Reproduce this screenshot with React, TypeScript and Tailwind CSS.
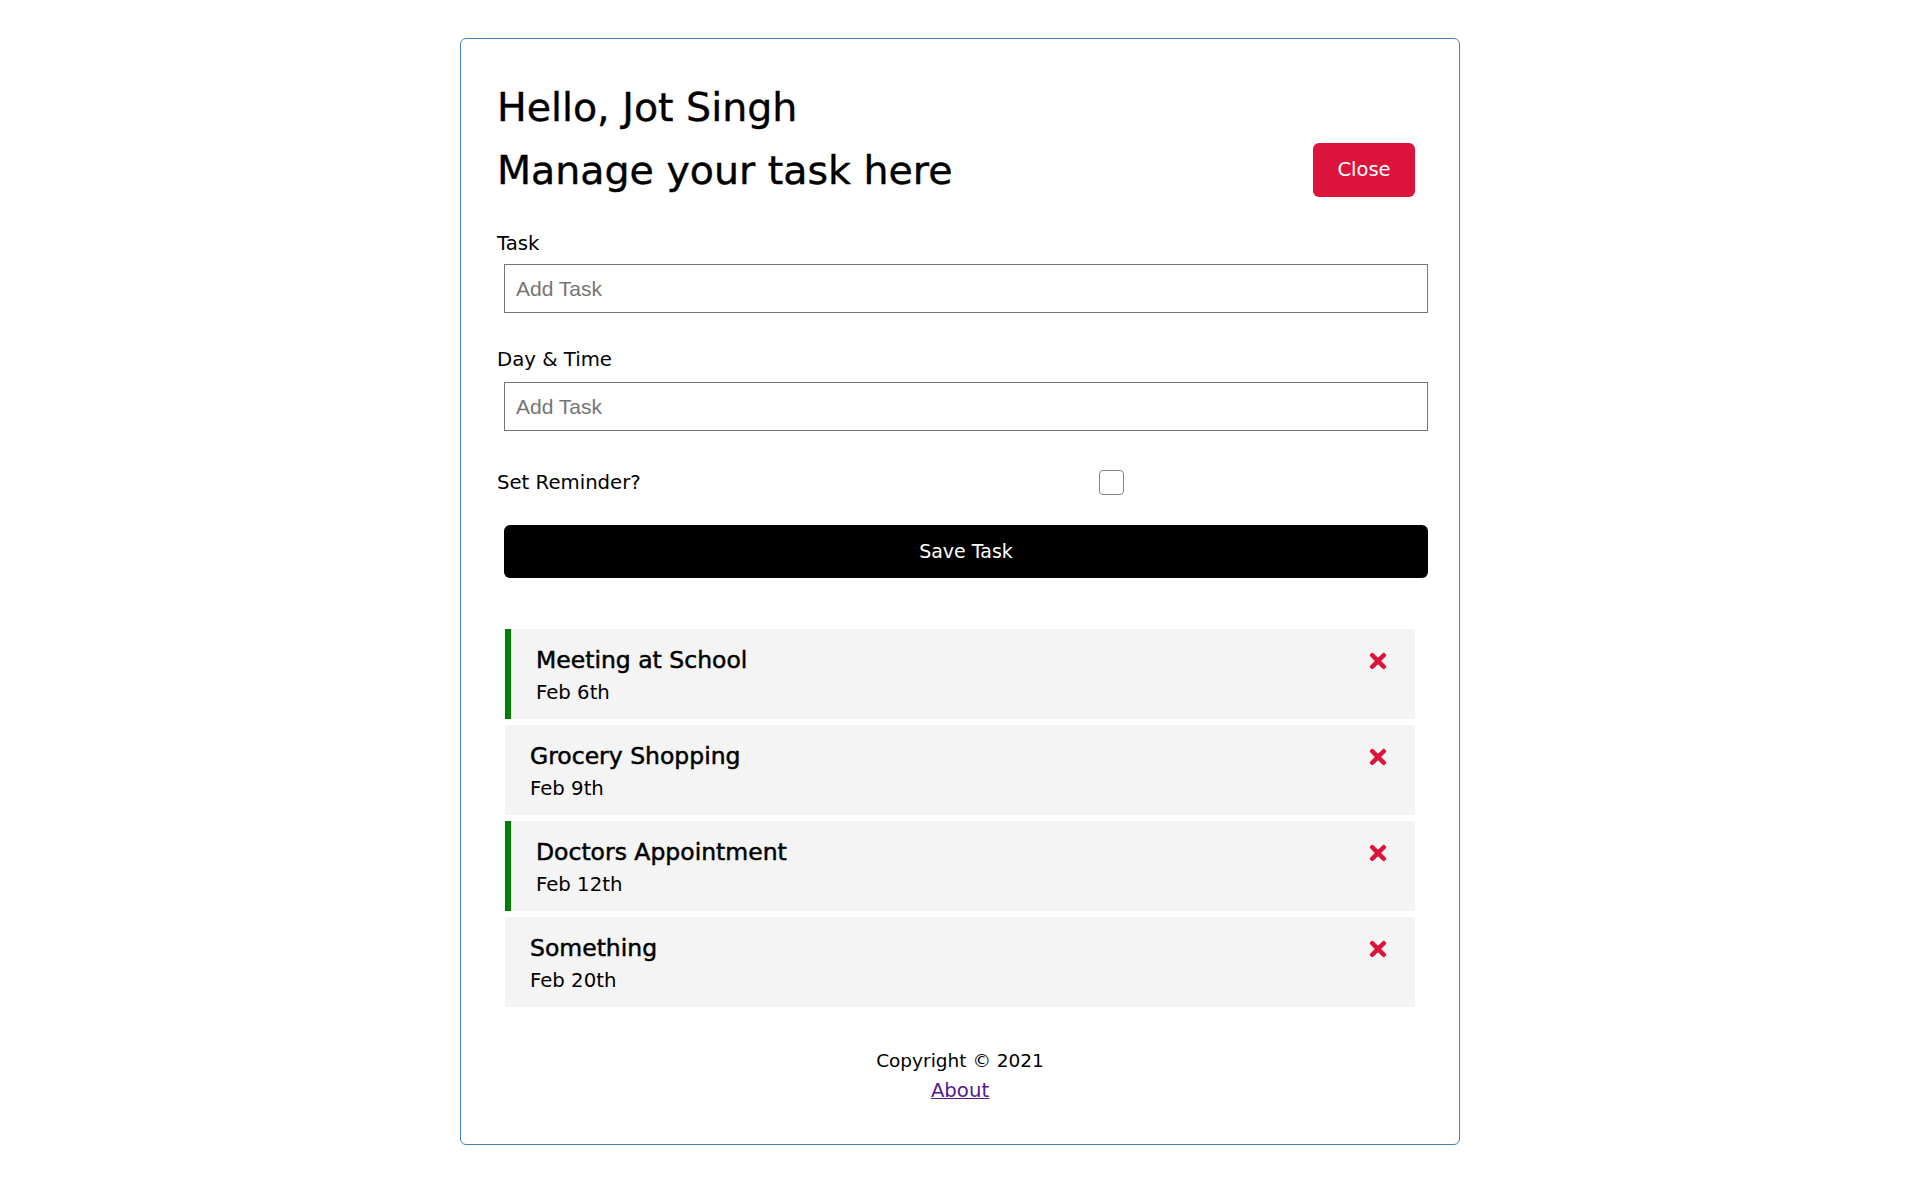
import { FaTimes } from 'react-icons/fa';

interface Task {
  id: number;
  text: string;
  day: string;
  reminder: boolean;
}

const tasks: Task[] = [
  { id: 1, text: 'Meeting at School', day: 'Feb 6th', reminder: true },
  { id: 2, text: 'Grocery Shopping', day: 'Feb 9th', reminder: false },
  { id: 3, text: 'Doctors Appointment', day: 'Feb 12th', reminder: true },
  { id: 4, text: 'Something', day: 'Feb 20th', reminder: false },
];

function TaskItem({ task }: { task: Task }) {
  return (
    <div
      className={
        task.reminder
          ? 'h-[90px] bg-[#f4f4f4] border-l-[6px] border-[#008000] pl-[25px] pr-[25px] pt-[16px]'
          : 'h-[90px] bg-[#f4f4f4] pl-[25px] pr-[25px] pt-[16px]'
      }
    >
      <div className="flex items-center justify-between text-[23.5px] leading-[31px]">
        <span className="[-webkit-text-stroke:0.5px_black]">{task.text}</span>
        <FaTimes size={24} className="text-[#dc143c]" />
      </div>
      <p className="mt-[3px] text-[19.7px] leading-[27px]">{task.day}</p>
    </div>
  );
}

export default function App() {
  return (
    <div
      className="min-h-screen bg-white pt-[38px] pb-[38px] text-black"
      style={{ fontFamily: '"DejaVu Sans", "Open Sans", sans-serif' }}
    >
      <div className="mx-auto w-[1000px] rounded-[6px] border border-[#4682b4] px-[36px] pt-[38px] pb-[40px]">
        <h1 className="text-[39.5px] leading-[60px] [-webkit-text-stroke:0.4px_black]">Hello, Jot Singh</h1>

        {/* Header */}
        <div className="mt-[3px] flex items-start justify-between">
          <h1 className="text-[39.5px] leading-[60px] [-webkit-text-stroke:0.4px_black]">Manage your task here</h1>
          <button className="mt-[3px] mr-[8px] h-[54px] w-[102px] rounded-[6px] bg-[#dc143c] text-[19.5px] text-white">
            Close
          </button>
        </div>

        {/* Add form */}
        <form>
          <label className="mt-[29px] block text-[19.7px] leading-[29px]">Task</label>
          <input
            type="text"
            placeholder="Add Task"
            className="mt-[6px] ml-[7px] block h-[49px] w-[924px] border border-[#767676] px-[11px] text-[21px] placeholder:text-[#757575]"
            style={{ fontFamily: '"Liberation Sans", Arial, sans-serif' }}
          />

          <label className="mt-[32px] block text-[19.7px] leading-[29px]">Day &amp; Time</label>
          <input
            type="text"
            placeholder="Add Task"
            className="mt-[8px] ml-[7px] block h-[49px] w-[924px] border border-[#767676] px-[11px] text-[21px] placeholder:text-[#757575]"
            style={{ fontFamily: '"Liberation Sans", Arial, sans-serif' }}
          />

          <div className="mt-[37px] flex h-[29px] items-center">
            <label className="w-[602px] text-[19.7px] leading-[29px]">Set Reminder?</label>
            <span className="block h-[25px] w-[25px] rounded-[4px] border border-[#858585] bg-white" />
          </div>

          <button
            type="button"
            className="mt-[28px] ml-[7px] block h-[53px] w-[924px] rounded-[6px] bg-black text-[19px] text-white"
          >
            Save Task
          </button>
        </form>

        {/* Tasks */}
        <div className="mt-[51px] flex flex-col gap-[6px] pl-[8px] pr-[8px]">
          {tasks.map((task) => (
            <TaskItem key={task.id} task={task} />
          ))}
        </div>

        {/* Footer */}
        <footer className="mt-[40px] text-center text-[18.5px] leading-[27px]">
          <p>Copyright &copy; 2021</p>
          <a href="#" className="mt-[3px] inline-block text-[19.7px] text-[#551a8b] underline">
            About
          </a>
        </footer>
      </div>
    </div>
  );
}
